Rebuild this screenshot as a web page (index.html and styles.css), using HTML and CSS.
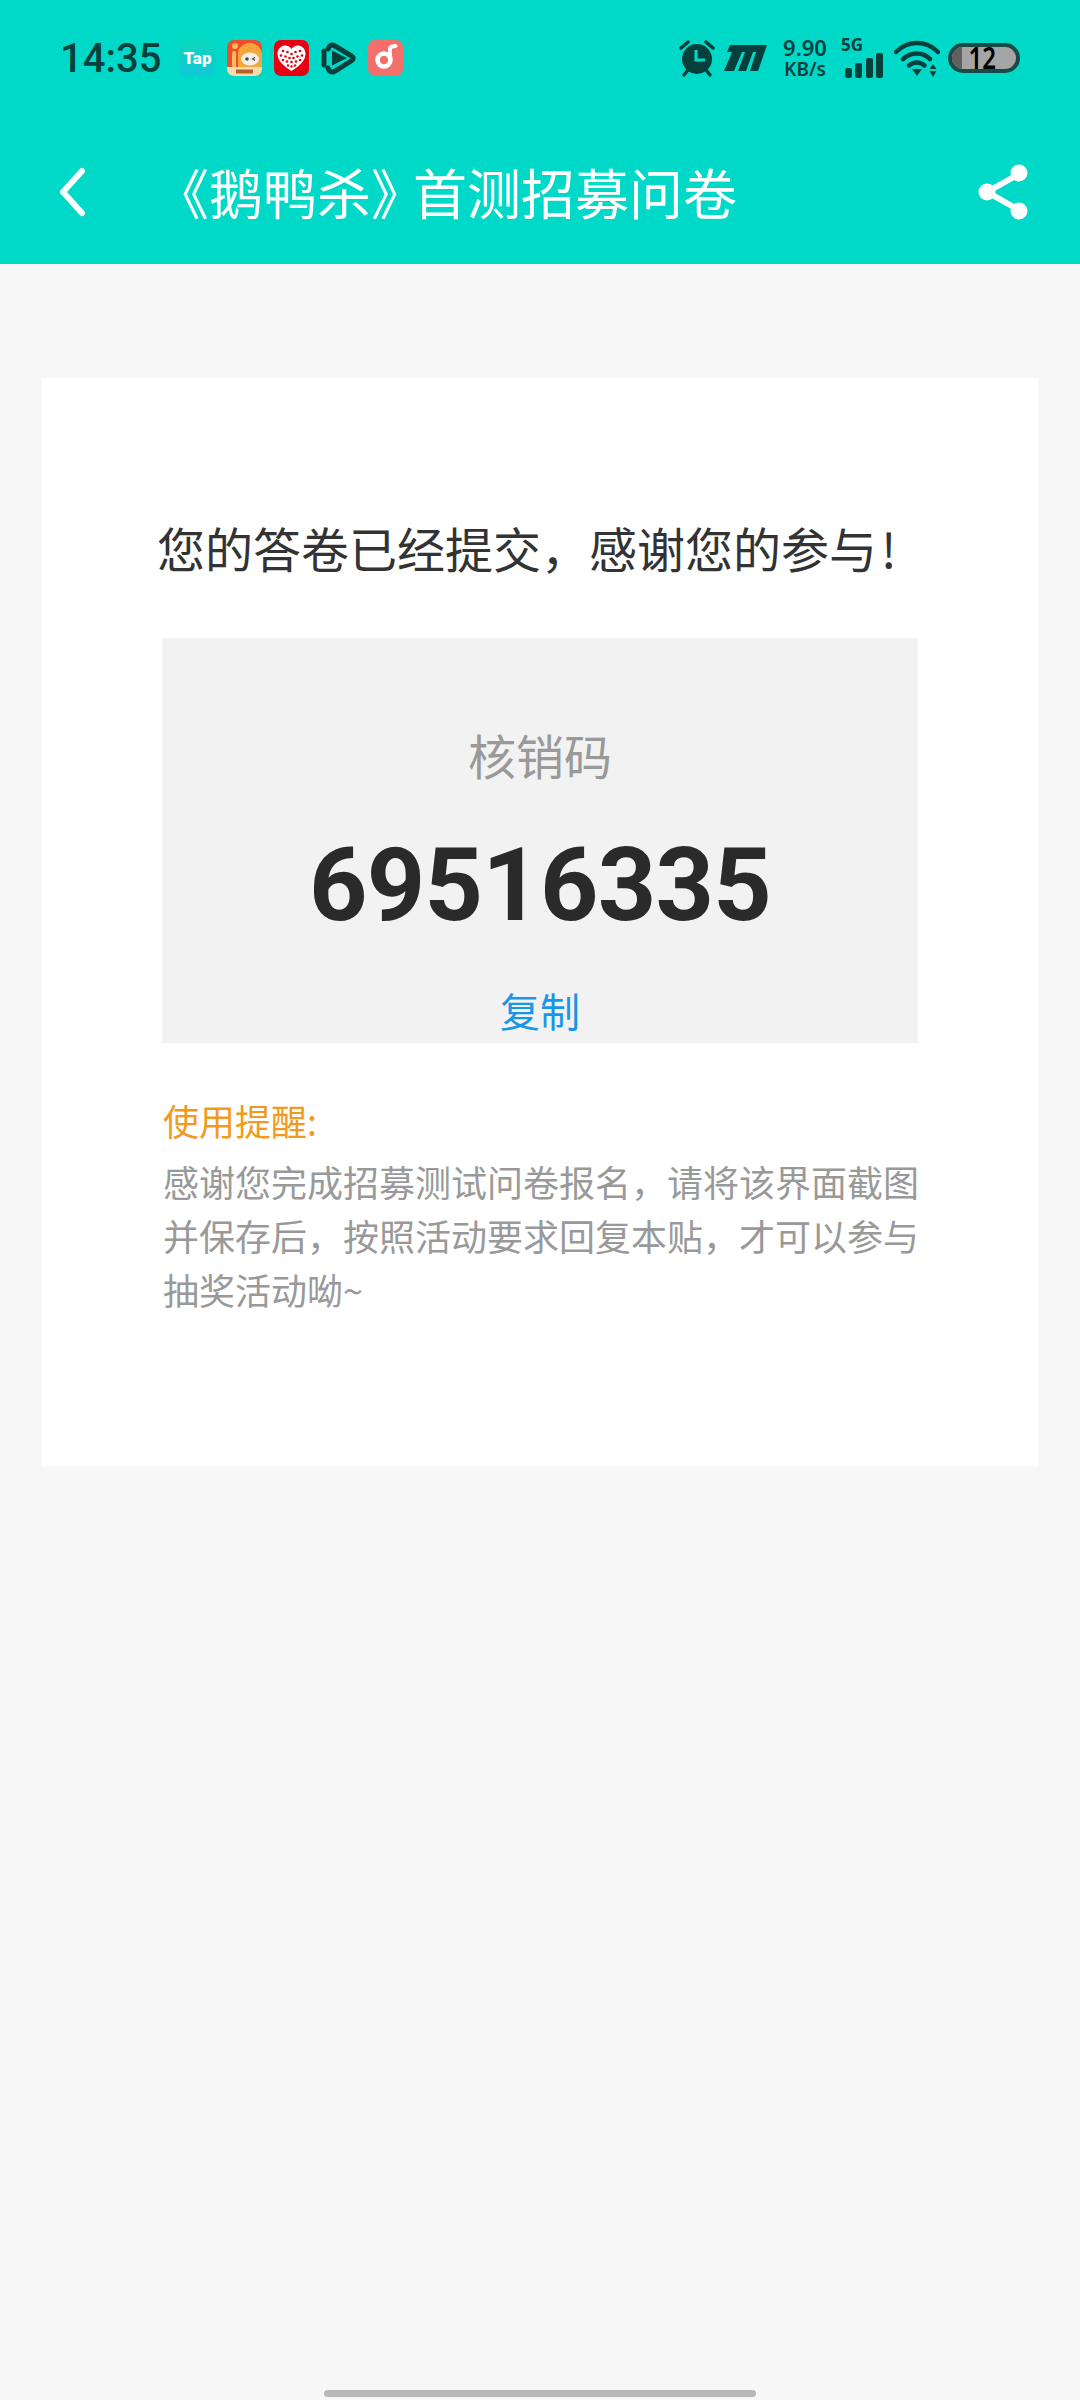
FILE: index.html
```html
<!DOCTYPE html>
<html lang="zh-CN">
<head>
<meta charset="utf-8">
<title>《鹅鸭杀》首测招募问卷</title>
<link rel="stylesheet" href="styles.css">
</head>
<body>
<header class="top_bar">
	<div class="status_bar">
		<span class="status_time">14:35</span>
		<div class="status_apps">
			<svg class="app_icon" viewBox="0 0 35 36">
				<defs><linearGradient id="tapFill" x1="0" y1="0" x2="0" y2="1"><stop offset="0" stop-color="#0bd8bc"/><stop offset="1" stop-color="#12c6d8"/></linearGradient></defs>
				<rect width="35" height="36" rx="7" fill="url(#tapFill)"/>
				<text x="17.500" y="23.500" class="tap_text">Tap</text>
			</svg>
			<svg class="app_icon" viewBox="0 0 35 36">
				<rect width="35" height="36" rx="7" fill="#f04e2a"/>
				<path d="M11 28V14C11 7 17 3 23 3s12 5 12 12v13z" fill="#f5a63a"/>
				<rect x="5" y="11" width="4" height="17" rx="2" fill="#f7bb62"/>
				<circle cx="8" cy="6" r="3" fill="#f7bb62"/>
				<ellipse cx="23" cy="19" rx="9" ry="6.500" fill="#f3efe8"/>
				<circle cx="20" cy="19" r="1.800" fill="#4a4a4a"/>
				<path d="M28 17.500l-2.500 1.500 2.500 1.500" fill="none" stroke="#4a4a4a" stroke-width="1.200"/>
				<path d="M0 27h35v2a7 7 0 0 1-7 7H7a7 7 0 0 1-7-7z" fill="#f8dcae"/>
				<rect x="9" y="29.500" width="17" height="4" fill="#b5622a"/>
			</svg>
			<svg class="app_icon" viewBox="0 0 35 36">
				<rect width="35" height="36" rx="7" fill="#e60012"/>
				<path d="M17.500 31C8 25 3.500 20 3.500 13.500 3.500 8.500 7.500 5.500 11 5.500c2.800 0 5 1.500 6.500 3.500 1.500-2 3.700-3.500 6.500-3.500 3.500 0 7.500 3 7.500 8 0 6.500-4.500 11.500-14 17.500z" fill="#fff"/>
				<g fill="#e60012">
					<circle cx="9" cy="11" r="1.300"/><circle cx="13.500" cy="12" r="1.300"/><circle cx="17.500" cy="14" r="1.300"/><circle cx="21.500" cy="12" r="1.300"/><circle cx="26" cy="11" r="1.300"/>
					<circle cx="7" cy="15.500" r="1.300"/><circle cx="11.500" cy="16.500" r="1.300"/><circle cx="15.500" cy="18" r="1.300"/><circle cx="19.500" cy="18" r="1.300"/><circle cx="23.500" cy="16.500" r="1.300"/><circle cx="28" cy="15.500" r="1.300"/>
					<circle cx="9" cy="20" r="1.300"/><circle cx="13" cy="21.500" r="1.300"/><circle cx="17.500" cy="22" r="1.300"/><circle cx="22" cy="21.500" r="1.300"/><circle cx="26" cy="20" r="1.300"/>
					<circle cx="14" cy="25.500" r="1.200"/><circle cx="17.500" cy="26.500" r="1.200"/><circle cx="21" cy="25.500" r="1.200"/>
				</g>
			</svg>
			<svg class="app_icon" viewBox="0 0 35 36">
				<path d="M7 9c1-3.500 3.500-5 7-3l16 9.500c3 2 3 3.500 0 5.500L14 31c-3.500 2-6 .5-7-3" fill="none" stroke="#06403c" stroke-width="5" stroke-linecap="round"/>
				<path d="M3 11v14" stroke="#06403c" stroke-width="5" stroke-linecap="round"/>
				<path d="M11 10.500l15 7.500-15 7.500z" fill="#06403c"/>
			</svg>
			<svg class="app_icon" viewBox="0 0 35 36">
				<rect width="35" height="36" rx="7" fill="#f36f6c"/>
				<path d="M22 19.500V9c0-1.500 1-2.300 2.500-2.500l3-.5" fill="none" stroke="#fff" stroke-width="4" stroke-linecap="round"/>
				<circle cx="16" cy="20" r="6.500" fill="none" stroke="#fff" stroke-width="4.500"/>
			</svg>
		</div>
		<div class="status_right">
			<svg class="alarm_icon" viewBox="0 0 36 38">
				<circle cx="18" cy="20" r="15" fill="#06403c"/>
				<path d="M17 11v10h9" fill="none" stroke="#00d8c8" stroke-width="3"/>
				<path d="M2 9l7-6M34 9l-7-6" stroke="#06403c" stroke-width="3.500" stroke-linecap="round"/>
				<path d="M5 36l4-5M31 36l-4-5" stroke="#06403c" stroke-width="3.500" stroke-linecap="round"/>
			</svg>
			<svg class="brand_icon" viewBox="0 0 43 26">
				<path d="M6 0h37l-9 26h-8l6-19h-3l-7 19h-8l7-19h-3L10 26H0L8 7H3z" fill="#06403c"/>
			</svg>
			<div class="net_speed"><span class="net_value">9.90</span><span class="net_unit">KB/s</span></div>
			<div class="signal_block">
				<span class="signal_label">5G</span>
				<div class="signal_bars">
					<i class="bar_one"></i><i class="bar_two"></i><i class="bar_three"></i><i class="bar_four"></i>
				</div>
			</div>
			<svg class="wifi_icon" viewBox="0 0 46 38">
				<path d="M2 13C14 1 32 1 44 13" fill="none" stroke="#06403c" stroke-width="4.500" stroke-linecap="round"/>
				<path d="M9 20c8-7.500 20-7.500 27 0" fill="none" stroke="#06403c" stroke-width="4.500" stroke-linecap="round"/>
				<path d="M15 26.500c4.500-4 11-4 15.500 0" fill="none" stroke="#06403c" stroke-width="4.500" stroke-linecap="round"/>
				<path d="M18 30h10l-5 7z" fill="#06403c"/>
				<path d="M39 25l3.500 5h-7zM39 38l3.500-6h-7z" fill="#06403c"/>
			</svg>
			<div class="battery">
				<div class="battery_level"></div>
				<span class="battery_text">12</span>
			</div>
		</div>
	</div>
	<div class="title_row">
		<svg class="back_icon" viewBox="0 0 28 50">
			<path d="M24 4L5 25l19 21" fill="none" stroke="#fff" stroke-width="6" stroke-linecap="round" stroke-linejoin="round"/>
		</svg>
		<h1 class="page_title">《鹅鸭杀<span class="title_close">》</span>首测招募问卷</h1>
		<svg class="share_icon" viewBox="0 0 50 56">
			<path d="M41 10L9 28l32 18" fill="none" stroke="#fff" stroke-width="6"/>
			<circle cx="41" cy="9" r="8.500" fill="#fff"/>
			<circle cx="9" cy="28" r="8.500" fill="#fff"/>
			<circle cx="41" cy="47" r="8.500" fill="#fff"/>
		</svg>
	</div>
</header>
<main class="page_body">
	<section class="result_card">
		<p class="result_title">您的答卷已经提交，感谢您的参与<span class="result_mark">!</span></p>
		<div class="code_box">
			<div class="code_label">核销码</div>
			<div class="code_value">69516335</div>
			<a href="#" class="code_copy">复制</a>
		</div>
		<div class="notice">
			<div class="notice_title">使用提醒:</div>
			<p class="notice_text">感谢您完成招募测试问卷报名，请将该界面截图并保存后，按照活动要求回复本贴，才可以参与抽奖活动呦~</p>
		</div>
	</section>
</main>
<div class="home_bar"><span class="home_handle"></span></div>
</body>
</html>
```

FILE: styles.css
```css
html, body{
	margin:0;
	padding:0;
}
body{
	width:1080px;
	height:2400px;
	display:flex;
	flex-direction:column;
	background:#f7f7f7;
	font-family:"Noto Sans CJK SC", "Noto Sans", sans-serif;
	overflow:hidden;
}
.top_bar{
	height:264px;
	background:#00d8c8;
	flex-shrink:0;
}
.status_bar{
	height:116px;
	box-sizing:border-box;
	padding:0 60px;
	display:flex;
	align-items:center;
	color:#06403c;
}
.status_time{
	font-family:Roboto, sans-serif;
	font-size:40px;
	font-weight:500;
	width:120px;
}
.status_apps{
	display:flex;
	gap:12px;
	align-items:center;
}
.app_icon{
	width:35px;
	height:36px;
	display:block;
}
.tap_text{
	font-family:Roboto, sans-serif;
	font-size:17px;
	font-weight:900;
	fill:#fff;
	text-anchor:middle;
}
.status_right{
	margin-left:auto;
	display:flex;
	align-items:center;
}
.alarm_icon{
	width:36px;
	height:38px;
	margin-right:9px;
}
.brand_icon{
	width:43px;
	height:26px;
	margin-right:15px;
}
.net_speed{
	display:flex;
	flex-direction:column;
	align-items:center;
	width:46px;
	font-family:"Noto Sans", sans-serif;
	font-weight:600;
	margin-right:15px;
}
.net_value{
	font-size:22px;
	line-height:23px;
}
.net_unit{
	font-size:19px;
	line-height:21px;
}
.signal_block{
	width:40px;
	height:40px;
	position:relative;
	margin-right:11px;
}
.signal_label{
	position:absolute;
	top:-2px;
	left:-2px;
	font-family:"Noto Sans", sans-serif;
	font-size:17px;
	line-height:18px;
	font-weight:700;
}
.signal_bars{
	position:absolute;
	bottom:0;
	left:2px;
	right:0;
	display:flex;
	align-items:flex-end;
	justify-content:space-between;
}
.signal_bars i{
	display:block;
	width:7px;
	background:#06403c;
	border-radius:2px;
}
.bar_one{height:10px;}
.bar_two{height:15px;}
.bar_three{height:20px;}
.bar_four{height:25px;}
.wifi_icon{
	width:46px;
	height:38px;
	margin-right:8px;
}
.battery{
	width:72px;
	height:30px;
	box-sizing:border-box;
	border:4px solid #1a4a48;
	border-radius:15px;
	background:#a5a5a5;
	position:relative;
	display:flex;
	align-items:center;
	justify-content:center;
}
.battery_level{
	position:absolute;
	left:0;
	top:0;
	bottom:0;
	width:10px;
	background:#606060;
	border-radius:11px 0 0 11px;
}
.battery_text{
	position:relative;
	font-family:"Noto Sans", sans-serif;
	font-size:30px;
	font-weight:600;
	line-height:22px;
	color:#000;
	margin-right:4px;
	transform:scaleX(.8);
}
.title_row{
	height:148px;
	box-sizing:border-box;
	padding:4px 52px 0 58px;
	display:flex;
	align-items:center;
}
.back_icon{
	width:28px;
	height:50px;
	margin-right:69px;
}
.page_title{
	margin:0;
	font-size:54px;
	font-weight:400;
	line-height:64px;
	color:#fff;
	white-space:nowrap;
}
.title_close{
	letter-spacing:-12px;
}
.share_icon{
	width:50px;
	height:56px;
	margin-left:auto;
}
.page_body{
	flex:1;
	padding:114px 42px 0;
}
.result_card{
	height:1088px;
	box-sizing:border-box;
	background:#fff;
	padding:133px 120px 0;
}
.result_title{
	margin:0 -12px 0 -5px;
	font-size:48px;
	line-height:72px;
	color:#333;
	white-space:nowrap;
}
.result_mark{
	margin-left:4px;
}
.code_box{
	height:405px;
	margin-top:55px;
	background:#f2f2f2;
	display:flex;
	flex-direction:column;
	align-items:center;
	padding-top:81px;
	box-sizing:border-box;
}
.code_label{
	font-size:48px;
	line-height:70px;
	color:#999;
}
.code_value{
	font-family:Roboto, sans-serif;
	font-size:102px;
	font-weight:700;
	letter-spacing:-0.8px;
	line-height:110px;
	color:#2a2a2a;
	margin-top:41px;
}
.code_copy{
	font-size:40px;
	line-height:56px;
	color:#1a96e8;
	text-decoration:none;
	margin-top:42px;
}
.notice{
	margin:50px -4px 0 1px;
}
.notice_title{
	font-size:36px;
	line-height:54px;
	color:#f39a1e;
}
.notice_text{
	margin:7px 0 0;
	font-size:36px;
	line-height:54px;
	color:#999;
}
.home_bar{
	height:24px;
	box-sizing:border-box;
	padding-bottom:3px;
	flex-shrink:0;
	display:flex;
	justify-content:center;
	align-items:flex-end;
}
.home_handle{
	width:432px;
	height:7px;
	border-radius:4px;
	background:#b8b8b8;
}
```
